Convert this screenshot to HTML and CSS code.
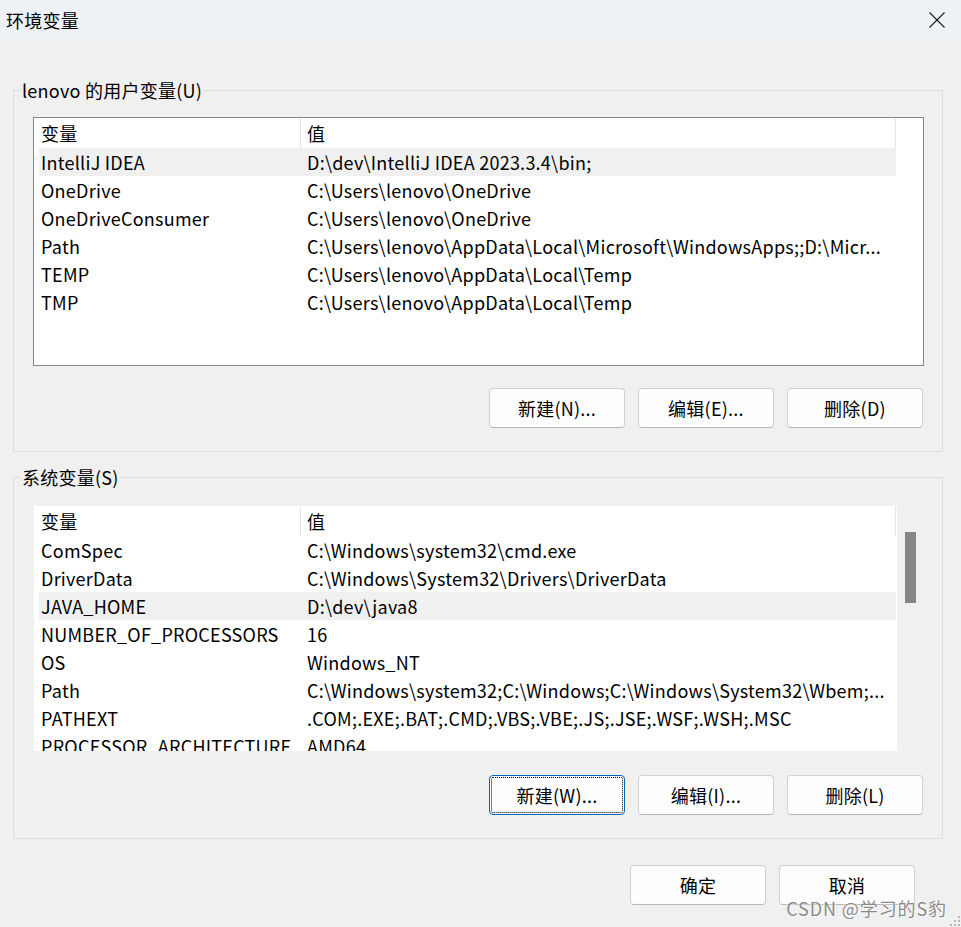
FILE: index.html
```html
<!DOCTYPE html>
<html lang="zh-CN">
<head>
<meta charset="utf-8">
<title>环境变量</title>
<link rel="stylesheet" href="styles.css">
</head>
<body>
<div class="window">
  <div class="titlebar">
    <span class="title">环境变量</span>
    <span class="close">
      <svg width="16" height="16" viewBox="0 0 16 16"><path d="M0.5 0.5 L15.5 15.5 M15.5 0.5 L0.5 15.5" stroke="#1b1b1b" stroke-width="1.1" fill="none"/></svg>
    </span>
  </div>
  <div class="content">
    <div class="group group-user">
      <span class="group-title">lenovo 的用户变量(U)</span>
      <div class="listbox list-user">
        <div class="list-body">
          <div class="row head"><span class="c1">变量</span><span class="c2">值</span></div>
          <div class="row sel"><span class="c1">IntelliJ IDEA</span><span class="c2">D:\dev\IntelliJ IDEA 2023.3.4\bin;</span></div>
          <div class="row"><span class="c1">OneDrive</span><span class="c2">C:\Users\lenovo\OneDrive</span></div>
          <div class="row"><span class="c1">OneDriveConsumer</span><span class="c2">C:\Users\lenovo\OneDrive</span></div>
          <div class="row"><span class="c1">Path</span><span class="c2">C:\Users\lenovo\AppData\Local\Microsoft\WindowsApps;;D:\Micr...</span></div>
          <div class="row"><span class="c1">TEMP</span><span class="c2">C:\Users\lenovo\AppData\Local\Temp</span></div>
          <div class="row"><span class="c1">TMP</span><span class="c2">C:\Users\lenovo\AppData\Local\Temp</span></div>
        </div>
      </div>
      <div class="btnrow">
        <button class="btn">新建(N)...</button>
        <button class="btn">编辑(E)...</button>
        <button class="btn">删除(D)</button>
      </div>
    </div>

    <div class="group group-sys">
      <span class="group-title">系统变量(S)</span>
      <div class="listbox list-sys">
        <div class="list-body">
          <div class="row head"><span class="c1">变量</span><span class="c2">值</span></div>
          <div class="row"><span class="c1">ComSpec</span><span class="c2">C:\Windows\system32\cmd.exe</span></div>
          <div class="row"><span class="c1">DriverData</span><span class="c2">C:\Windows\System32\Drivers\DriverData</span></div>
          <div class="row sel"><span class="c1">JAVA_HOME</span><span class="c2">D:\dev\java8</span></div>
          <div class="row"><span class="c1">NUMBER_OF_PROCESSORS</span><span class="c2">16</span></div>
          <div class="row"><span class="c1">OS</span><span class="c2">Windows_NT</span></div>
          <div class="row"><span class="c1">Path</span><span class="c2">C:\Windows\system32;C:\Windows;C:\Windows\System32\Wbem;...</span></div>
          <div class="row"><span class="c1">PATHEXT</span><span class="c2">.COM;.EXE;.BAT;.CMD;.VBS;.VBE;.JS;.JSE;.WSF;.WSH;.MSC</span></div>
          <div class="row"><span class="c1">PROCESSOR_ARCHITECTURE</span><span class="c2">AMD64</span></div>
        </div>
        <div class="scrollbar"><div class="thumb"></div></div>
      </div>
      <div class="btnrow">
        <button class="btn focus">新建(W)...</button>
        <button class="btn">编辑(I)...</button>
        <button class="btn">删除(L)</button>
      </div>
    </div>

    <div class="footer">
      <button class="btn">确定</button>
      <button class="btn">取消</button>
    </div>
  </div>
  <div class="watermark">CSDN @学习的S豹</div>
  <svg class="grip" width="12" height="12" viewBox="0 0 12 12">
    <rect x="9" y="1" width="2" height="2" fill="#b5b5b5"/>
    <rect x="5" y="5" width="2" height="2" fill="#b5b5b5"/>
    <rect x="9" y="5" width="2" height="2" fill="#b5b5b5"/>
    <rect x="1" y="9" width="2" height="2" fill="#b5b5b5"/>
    <rect x="5" y="9" width="2" height="2" fill="#b5b5b5"/>
    <rect x="9" y="9" width="2" height="2" fill="#b5b5b5"/>
  </svg>
</div>
</body>
</html>
```

FILE: styles.css
```css
html, body {
  margin: 0;
  padding: 0;
}
body {
  background: #f0f0f0;
  font-family: "Noto Sans CJK SC", "Noto Sans", sans-serif;
  font-size: 18px;
  letter-spacing: 0.25px;
  color: #000;
}
.window {
  position: relative;
  width: 961px;
  height: 927px;
  overflow: hidden;
  background: #f0f0f0;
}
.titlebar {
  height: 42px;
  background: #eef2f6;
  display: flex;
  align-items: center;
  justify-content: space-between;
  padding: 0 16px 2px 6px;
  box-sizing: border-box;
}
.title {
  font-size: 18px;
  line-height: 24px;
}
.close {
  display: flex;
  width: 16px;
  height: 16px;
}
.content {
  padding: 48px 18px 0 13px;
}
.group {
  position: relative;
  border: 1px solid #dcdcdc;
  padding: 26px 18px 23px 19px;
}
.group-sys {
  margin-top: 25px;
  padding-top: 27px;
}
.group-title {
  position: absolute;
  top: -13px;
  left: 6px;
  padding: 0 2px;
  line-height: 24px;
  background: #f0f0f0;
  white-space: nowrap;
}
.listbox {
  display: flex;
  border: 1px solid #828790;
  background: #fff;
  overflow: hidden;
}
.list-user {
  height: 249px;
  box-sizing: border-box;
}
.list-sys {
  height: 247px;
  box-sizing: border-box;
  border-color: transparent;
  background: #f0f0f0;
}
.list-body {
  flex: 1;
  background: #fff;
  overflow: hidden;
  padding-left: 5px;
}
.row {
  display: flex;
  width: 857px;
  height: 28px;
  line-height: 28px;
  white-space: nowrap;
}
.row.head {
  height: 30px;
  line-height: 30px;
}
.row.sel {
  background: #f0f0f0;
}
.c1 {
  width: 262px;
  box-sizing: border-box;
  padding-left: 2px;
  overflow: hidden;
}
.c2 {
  flex: 1;
  padding-left: 6px;
  overflow: hidden;
}
.head .c1 {
  border-right: 1px solid #e5e5e5;
}
.head .c2 {
  border-right: 1px solid #e5e5e5;
}
.scrollbar {
  width: 26px;
  background: #f0f0f0;
}
.thumb {
  margin: 26px 0 0 8px;
  width: 11px;
  height: 71px;
  background: #858585;
}
.btnrow {
  display: flex;
  justify-content: flex-end;
  gap: 13px;
  margin-top: 22px;
  margin-right: 1px;
}
.group-sys .btnrow {
  margin-top: 23px;
}
.btn {
  width: 136px;
  height: 40px;
  box-sizing: border-box;
  background: #fdfdfd;
  border: 1px solid #d0d0d0;
  border-bottom-color: #b9b9b9;
  border-radius: 4px;
  font-family: "Noto Sans CJK SC", "Noto Sans", sans-serif;
  font-size: 18px;
  letter-spacing: 0.25px;
  color: #000;
  padding: 0;
  line-height: 36px;
}
.btn.focus {
  border: 1px solid #0067c0;
  outline: 1px dotted #000;
  outline-offset: -3px;
}
.footer {
  display: flex;
  justify-content: flex-end;
  gap: 13px;
  margin-top: 26px;
  padding-right: 28px;
}
.watermark {
  position: absolute;
  right: 14px;
  bottom: 8px;
  font-size: 18px;
  line-height: 22px;
  color: #8a8a8a;
  text-shadow: 0 0 2px #fff, 0 0 2px #fff;
  letter-spacing: 0.9px;
}
.grip {
  position: absolute;
  right: 0;
  bottom: 0;
}
```
